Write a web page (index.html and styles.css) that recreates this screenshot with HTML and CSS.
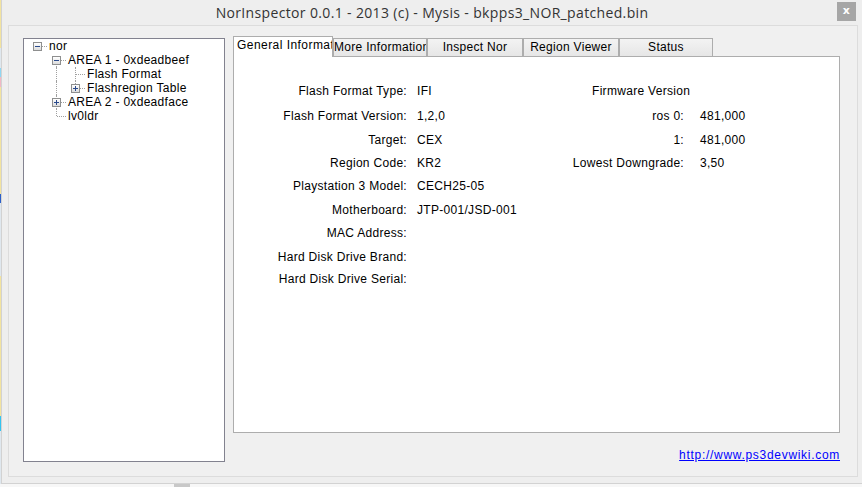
FILE: index.html
```html
<!DOCTYPE html>
<html>
<head>
	<meta charset="utf-8">
	<title>NorInspector</title>
	<link rel="stylesheet" href="styles.css">
</head>
<body>

<div class="screen">
	<div class="desk-edge"></div>
	<div class="window">
		<div class="titlebar">
			<span></span>
			<div class="title">NorInspector 0.0.1 - 2013 (c) - Mysis - bkpps3_NOR_patched.bin</div>
			<div class="close">x</div>
		</div>
		<div class="frame">
			<div class="tree">
				<div class="node">
					<span class="cell r"><span class="box minus"></span></span>
					<span class="label">nor</span>
				</div>
				<div class="node">
					<span class="cell"></span>
					<span class="cell f"><span class="box minus"></span></span>
					<span class="label">AREA 1 - 0xdeadbeef</span>
				</div>
				<div class="node">
					<span class="cell"></span>
					<span class="cell v"></span>
					<span class="cell t"></span>
					<span class="label">Flash Format</span>
				</div>
				<div class="node">
					<span class="cell"></span>
					<span class="cell v"></span>
					<span class="cell l"><span class="box plus"></span></span>
					<span class="label">Flashregion Table</span>
				</div>
				<div class="node">
					<span class="cell"></span>
					<span class="cell t"><span class="box plus"></span></span>
					<span class="label">AREA 2 - 0xdeadface</span>
				</div>
				<div class="node">
					<span class="cell"></span>
					<span class="cell l"></span>
					<span class="label">lv0ldr</span>
				</div>
			</div>

			<div class="main">
				<div class="tabs">
					<div class="tab active">General Information</div>
					<div class="tab w94">More Information</div>
					<div class="tab w96">Inspect Nor</div>
					<div class="tab w96">Region Viewer</div>
					<div class="tab w94">Status</div>
				</div>
				<div class="panel">
					<div class="info">
						<div class="key">Flash Format Type:</div><div class="val">IFI</div>
						<div class="key">Flash Format Version:</div><div class="val">1,2,0</div>
						<div class="key">Target:</div><div class="val">CEX</div>
						<div class="key">Region Code:</div><div class="val">KR2</div>
						<div class="key">Playstation 3 Model:</div><div class="val">CECH25-05</div>
						<div class="key">Motherboard:</div><div class="val">JTP-001/JSD-001</div>
						<div class="key">MAC Address:</div><div class="val"></div>
						<div class="key">Hard Disk Drive Brand:</div><div class="val"></div>
						<div class="key">Hard Disk Drive Serial:</div><div class="val"></div>
					</div>
					<div class="fw">
						<div class="fw-head">Firmware Version</div>
						<div class="key">ros 0:</div><div class="val">481,000</div>
						<div class="key">1:</div><div class="val">481,000</div>
						<div class="key">Lowest Downgrade:</div><div class="val">3,50</div>
					</div>
				</div>
				<div class="footer">
					<a href="#">http://www.ps3devwiki.com</a>
				</div>
			</div>
		</div>
	</div>
	<div class="desk-bottom"><span class="taskbit"></span></div>
</div>

</body>
</html>
```

FILE: styles.css
```css
* {
	margin: 0;
	padding: 0;
	box-sizing: border-box;
}
body {
	width: 862px;
	height: 487px;
	overflow: hidden;
	background: #fff;
	font: 12px "Liberation Sans", Arial, sans-serif;
	letter-spacing: .3px;
	color: #000;
}
.screen {
	display: grid;
	grid-template-columns: 1px 1fr;
	grid-template-rows: 484px 3px;
	height: 487px;
}
.desk-edge {
	background: linear-gradient(#f2e3a0 0 10%, #dfe7ee 10% 14%, #8fd6f2 14% 16%, #f0b7c4 16% 18%, #f2e3a0 18% 40%, #2b5fc9 40% 42%, #dfe7ee 42% 57%, #f2e3a0 57% 86%, #33c4f0 86% 89%, #dfe7ee 89%);
}
.window {
	background: #eeeeee;
	border-left: 1px solid #d2d2d2;
	border-bottom: 1px solid #d2d2d2;
}
.desk-bottom {
	grid-column: 1 / 3;
	background: #f7f7f7;
	padding-left: 174px;
}
.taskbit {
	display: block;
	width: 16px;
	height: 3px;
	background: #c8c8c8;
}

/* title bar */
.titlebar {
	height: 25px;
	display: grid;
	grid-template-columns: 1fr auto 1fr;
	align-items: start;
}
.title {
	font: 14px "Open Sans", "Noto Sans", sans-serif;
	letter-spacing: .35px;
	color: #333;
	line-height: 25px;
}
.close {
	justify-self: end;
	margin: 2px 6px 0 0;
	width: 19px;
	height: 19px;
	background: #a6a6a6;
	color: #fff;
	font: bold 11px "DejaVu Sans", sans-serif;
	line-height: 17px;
	text-align: center;
}

/* inner frame */
.frame {
	margin: 0 4px 0 6px;
	height: 452px;
	border: 1px solid #dcdcdc;
	background: #f0f0f0;
	display: flex;
	align-items: flex-start;
	padding: 10px 0 0 14px;
}

/* tree view */
.tree {
	margin-top: 2px;
	width: 202px;
	height: 424px;
	background: #fff;
	border: 1px solid #82828f;
	padding-left: 4px;
}
.node {
	display: flex;
	height: 14px;
	line-height: 14px;
	white-space: nowrap;
}
.node .label {
	margin-left: 2px;
}
.cell {
	position: relative;
	flex: none;
	width: 19px;
	height: 14px;
}
.cell.v::before,
.cell.t::before,
.cell.l::before,
.cell.f::before {
	content: "";
	position: absolute;
	left: 9px;
	top: 0;
	bottom: 0;
	border-left: 1px dotted #a0a0a0;
}
.cell.l::before {
	bottom: 7px;
}
.cell.f::before {
	top: 7px;
}
.cell.t::after,
.cell.l::after,
.cell.f::after,
.cell.r::after {
	content: "";
	position: absolute;
	left: 10px;
	right: 0;
	top: 7px;
	border-top: 1px dotted #a0a0a0;
}
.box {
	position: absolute;
	left: 5px;
	top: 3px;
	width: 9px;
	height: 9px;
	border: 1px solid #8e8f8f;
	background: linear-gradient(#fff, #dcdcdc);
	z-index: 1;
}
.box::before {
	content: "";
	position: absolute;
	left: 1px;
	top: 3px;
	width: 5px;
	height: 1px;
	background: #2a4a8c;
}
.box.plus::after {
	content: "";
	position: absolute;
	left: 3px;
	top: 1px;
	width: 1px;
	height: 5px;
	background: #2a4a8c;
}

/* tabs */
.main {
	margin-left: 8px;
	width: 607px;
}
.tabs {
	display: flex;
	height: 20px;
	align-items: flex-start;
}
.tab {
	height: 18px;
	margin-top: 2px;
	border: 1px solid #adadad;
	border-bottom: 0;
	background: linear-gradient(#f3f3f3, #e6e6e6);
	text-align: center;
	white-space: nowrap;
	overflow: hidden;
	line-height: 16px;
}
.tab.active {
	position: relative;
	z-index: 1;
	width: 100px;
	height: 21px;
	margin-top: 0;
	background: #fff;
	padding-left: 3px;
	line-height: 17px;
	letter-spacing: .45px;
}
.tab.w94 { width: 94px; }
.tab.w96 { width: 96px; }

.panel {
	height: 377px;
	background: #fff;
	border: 1px solid #adadad;
	display: flex;
	align-items: flex-start;
	padding: 27px 0 0 40px;
}
.info {
	display: grid;
	grid-template-columns: 133px 143px;
	grid-template-rows: 25px 24px 23px 23px 24px 23px 24px 22px 14px;
	column-gap: 10px;
	line-height: 14px;
	white-space: nowrap;
}
.key {
	text-align: right;
}
.fw {
	display: grid;
	grid-template-columns: 124px auto;
	grid-template-rows: 25px 24px 23px 14px;
	column-gap: 16px;
	line-height: 14px;
	white-space: nowrap;
}
.fw-head {
	grid-column: 1 / 3;
	padding-left: 32px;
}

.footer {
	margin-top: 15px;
	text-align: right;
	line-height: 14px;
}
.footer a {
	color: #0000ff;
	text-decoration: underline;
	letter-spacing: .7px;
}
```
